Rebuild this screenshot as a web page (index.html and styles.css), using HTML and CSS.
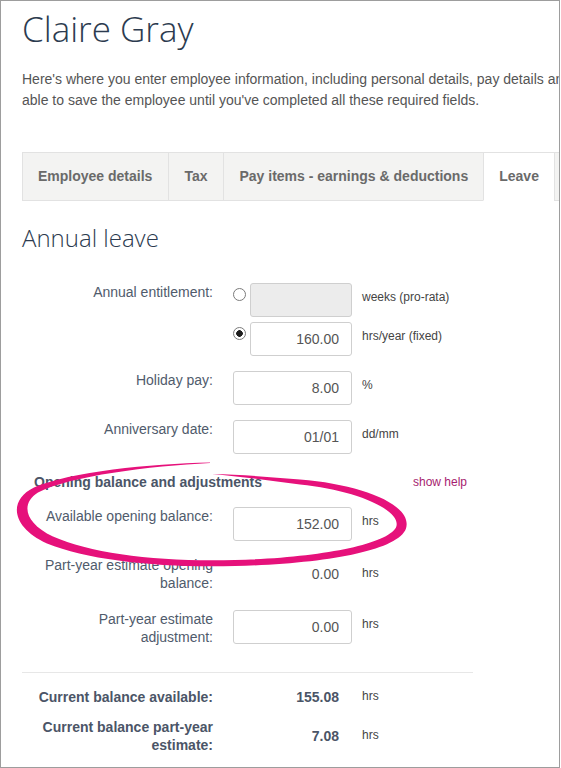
FILE: index.html
```html
<!DOCTYPE html>
<html lang="en">
<head>
<meta charset="utf-8">
<title>Claire Gray</title>
<link rel="stylesheet" href="styles.css">
</head>
<body>
<div class="frame">
  <div class="page">
    <h1 class="title">Claire Gray</h1>
    <p class="intro">Here's where you enter employee information, including personal details, pay details and leave balances. You won't be<br>able to save the employee until you've completed all these required fields.</p>

    <nav class="tabs">
      <a class="tab tab-wide">Employee details</a>
      <a class="tab tab-wide">Tax</a>
      <a class="tab">Pay items - earnings &amp; deductions</a>
      <a class="tab active">Leave</a>
      <a class="tab">Superannuation</a>
    </nav>

    <h2 class="section-title">Annual leave</h2>

    <div class="form">
      <div class="row">
        <div class="label">Annual entitlement:</div>
        <div class="field-stack">
          <div class="choice">
            <input class="radio" type="radio" name="ent">
            <input class="input short" type="text" disabled>
            <span class="unit">weeks (pro-rata)</span>
          </div>
          <div class="choice">
            <input class="radio" type="radio" name="ent" checked>
            <input class="input short" type="text" value="160.00">
            <span class="unit">hrs/year (fixed)</span>
          </div>
        </div>
      </div>

      <div class="row">
        <div class="label">Holiday pay:</div>
        <div class="field">
          <input class="input" type="text" value="8.00">
          <span class="unit">%</span>
        </div>
      </div>

      <div class="row">
        <div class="label">Anniversary date:</div>
        <div class="field">
          <input class="input" type="text" value="01/01">
          <span class="unit">dd/mm</span>
        </div>
      </div>

      <div class="subhead">
        <span class="subhead-title">Opening balance and adjustments</span>
        <a class="help">show help</a>
      </div>

      <div class="row">
        <div class="label">Available opening balance:</div>
        <div class="field">
          <input class="input" type="text" value="152.00">
          <span class="unit">hrs</span>
        </div>
      </div>

      <div class="row readonly gap-lg">
        <div class="label">Part-year estimate opening balance:</div>
        <div class="field">
          <span class="value">0.00</span>
          <span class="unit plain">hrs</span>
        </div>
      </div>

      <div class="row last">
        <div class="label">Part-year estimate adjustment:</div>
        <div class="field">
          <input class="input" type="text" value="0.00">
          <span class="unit">hrs</span>
        </div>
      </div>

      <hr class="divider">

      <div class="row readonly total gap-sm">
        <div class="label">Current balance available:</div>
        <div class="field">
          <span class="value">155.08</span>
          <span class="unit plain">hrs</span>
        </div>
      </div>

      <div class="row readonly total">
        <div class="label">Current balance part-year estimate:</div>
        <div class="field">
          <span class="value">7.08</span>
          <span class="unit plain">hrs</span>
        </div>
      </div>
    </div>
  </div>

  <svg class="annotation" width="560" height="768" viewBox="0 0 560 768" aria-hidden="true">
    <path d="M 210 462.5 C 150 464, 70 471.5, 34 487.5 C 8 500, 11 527, 47 543.5 C 89 560.5, 160 568, 235 566 C 323 564, 398 551, 406 528.5 C 413 505, 363 484.5, 300 479.5 C 270 477, 240 474.5, 212 474 C 240 476.5, 270 480.5, 300 484.5 C 357 490, 403 511, 396 527.5 C 386 545, 317 558, 235 560 C 160 562, 92 554, 53 536.5 C 25 523, 20 504, 38 492.5 C 70 476, 150 466, 210 463 Z" fill="#e6117b"/>
  </svg>
</div>
</body>
</html>
```

FILE: styles.css
```css
* {
  box-sizing: border-box;
}

html,
body {
  margin: 0;
  padding: 0;
  background: #fff;
}

body {
  font-family: "Liberation Sans", Arial, sans-serif;
  color: #555;
}

.frame {
  position: relative;
  width: 560px;
  height: 768px;
  border: 1px solid #9d9d9d;
  overflow: hidden;
}

.page {
  width: 860px;
  padding-left: 21px;
}

.title {
  margin: 6px 0 0;
  font-family: "Open Sans", sans-serif;
  font-weight: 300;
  font-size: 35px;
  line-height: 44px;
  color: #2c3b4f;
}

.intro {
  margin: 18px 0 0;
  font-size: 14px;
  line-height: 21px;
  color: #555;
}

.tabs {
  display: flex;
  margin-top: 41px;
}

.tab {
  flex: none;
  height: 49px;
  line-height: 47px;
  padding: 0 15px;
  margin-left: -1px;
  border: 1px solid #e2e2e2;
  background: #f3f3f2;
  font-size: 14px;
  font-weight: bold;
  color: #6a6a6a;
  white-space: nowrap;
}

.tab.tab-wide {
  padding-right: 16px;
}

.tab:first-child {
  margin-left: 0;
}

.tab.active {
  background: #fff;
  border-bottom-color: #fff;
}

.section-title {
  margin: 22px 0 0;
  font-family: "Open Sans", sans-serif;
  font-weight: 300;
  font-size: 24px;
  line-height: 30px;
  color: #2c3b4f;
}

.form {
  width: 451px;
  margin-top: 30px;
  padding: 0 6px 0 12px;
}

.row {
  display: grid;
  grid-template-columns: 179px auto;
  column-gap: 20px;
  align-items: start;
  margin-bottom: 15px;
}

.row.readonly {
  align-items: center;
}

.row.gap-lg {
  margin-bottom: 18px;
}

.row.gap-sm {
  margin-bottom: 12px;
}

.row.last {
  margin-bottom: 0;
}

.label {
  text-align: right;
  font-size: 14px;
  line-height: 18px;
  color: #505b6c;
}

.total .label {
  font-weight: bold;
  color: #4b5567;
}

.field,
.choice {
  display: flex;
  align-items: flex-start;
}

.choice + .choice {
  margin-top: 5px;
}

.radio {
  appearance: none;
  -webkit-appearance: none;
  flex: none;
  width: 13px;
  height: 13px;
  margin: 5px 4px 0 0;
  border: 1px solid #7b7b7b;
  border-radius: 50%;
  background: #fff;
}

.radio:checked {
  background: radial-gradient(circle, #1e1e1e 0 3px, #fff 3.6px);
}

.input {
  flex: none;
  width: 119px;
  height: 34px;
  margin: 0;
  padding: 0 12px;
  border: 1px solid #cfcfcf;
  border-radius: 3px;
  background: #fff;
  text-align: right;
  font-family: "Liberation Sans", Arial, sans-serif;
  font-size: 14px;
  color: #555;
  outline: none;
}

.input.short {
  width: 102px;
}

.input:disabled {
  background: #ececec;
}

.unit {
  margin-left: 10px;
  padding-top: 6px;
  font-size: 12px;
  line-height: 16px;
  color: #444;
}

.unit.plain {
  padding-top: 0;
}

.field .value {
  flex: none;
  width: 119px;
  padding-right: 13px;
  text-align: right;
  font-size: 14px;
  line-height: 18px;
  color: #555;
}

.total .value {
  font-weight: bold;
  color: #4b5567;
}

.subhead {
  display: flex;
  justify-content: space-between;
  align-items: center;
  padding-top: 4px;
  margin-bottom: 16px;
}

.subhead-title {
  font-size: 14px;
  font-weight: bold;
  line-height: 18px;
  color: #4b5567;
}

.help {
  font-size: 12px;
  color: #a61d6f;
  text-decoration: none;
}

.divider {
  height: 0;
  margin: 26px -6px 15px -12px;
  border: 0;
  border-top: 1px solid #e7e7e7;
}

.annotation {
  position: absolute;
  left: -1px;
  top: -1px;
  pointer-events: none;
}
```
